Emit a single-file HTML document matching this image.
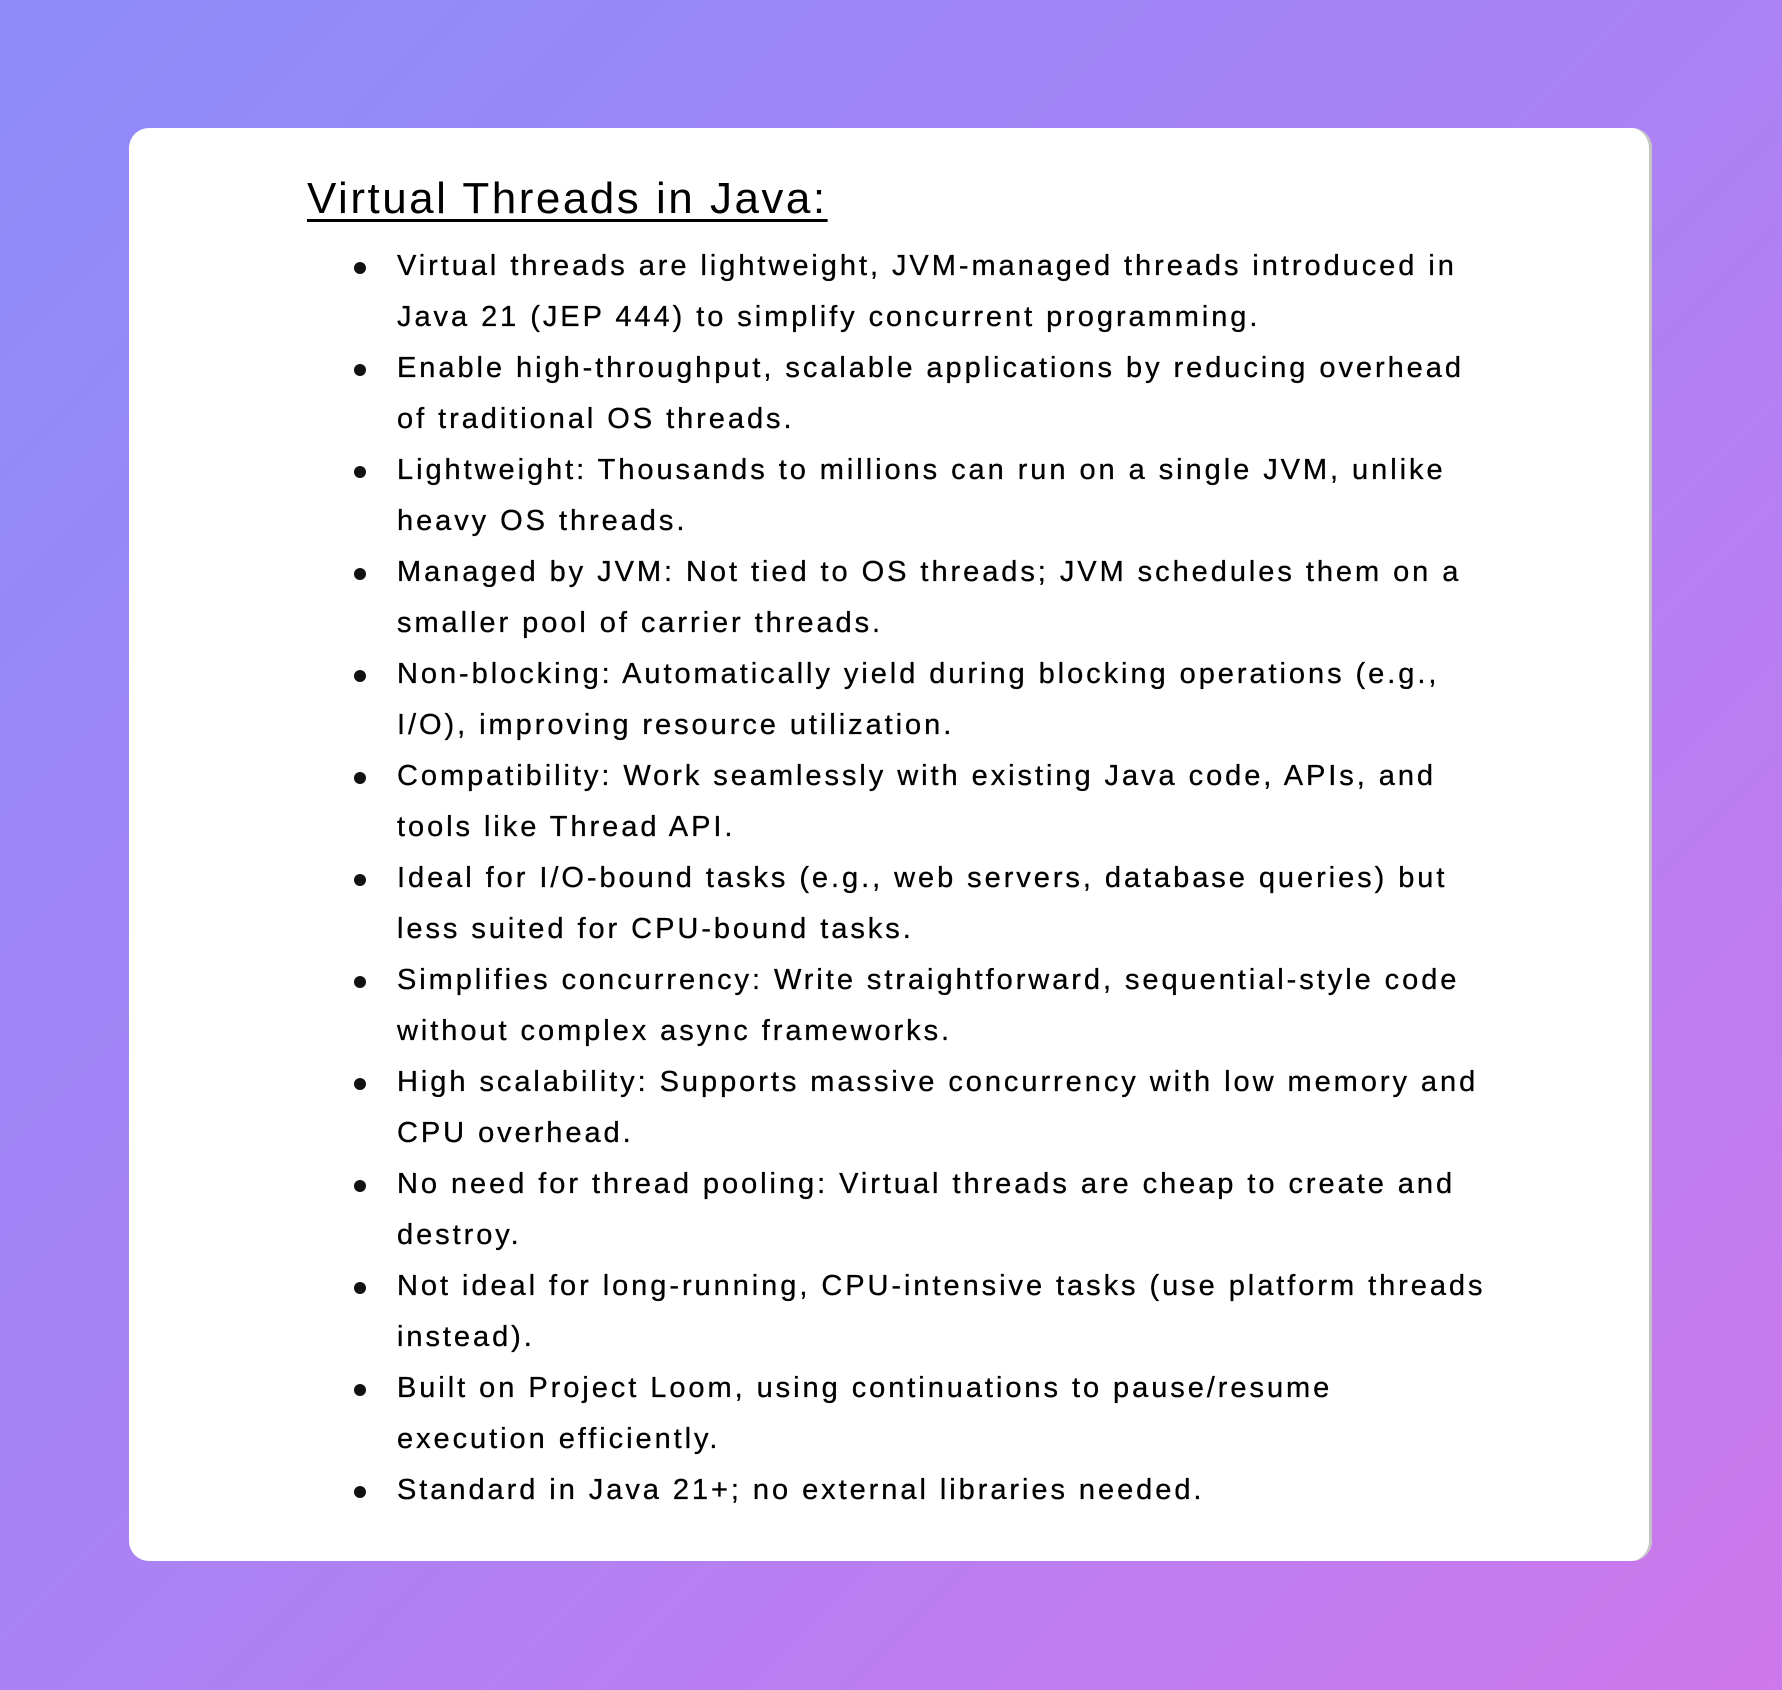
<!DOCTYPE html>
<html><head><meta charset="utf-8"><style>
html,body{margin:0;padding:0}
body{width:1782px;height:1690px;background:linear-gradient(135deg,#8d8cf9 0%,#ab82f4 50%,#cd78ec 100%);position:relative;overflow:hidden;font-family:"Liberation Sans",sans-serif;color:#000}
.card{position:absolute;left:129px;top:128px;width:1523px;height:1433px;background:#fff;border-radius:20px;box-shadow:inset -4px 0 0 -1px #c4c4c4}
h1{position:absolute;left:307px;top:172px;margin:0;font-weight:normal;font-size:44px;letter-spacing:2.5px;text-decoration:underline;text-decoration-thickness:3px;text-underline-offset:6px;line-height:54px}
ul{position:absolute;left:397px;top:241px;margin:0;padding:0;list-style:none;font-size:29px;line-height:51px;letter-spacing:2.95px;-webkit-text-stroke:0.3px #000}
li{position:relative;white-space:nowrap}
li:before{content:"";position:absolute;left:-43px;top:21px;width:12px;height:12px;border-radius:50%;background:#111}
</style></head><body>
<div class="card"></div>
<h1>Virtual Threads in Java:</h1>
<ul>
<li>Virtual threads are lightweight, JVM-managed threads introduced in<br>Java 21 (JEP 444) to simplify concurrent programming.</li>
<li>Enable high-throughput, scalable applications by reducing overhead<br>of traditional OS threads.</li>
<li>Lightweight: Thousands to millions can run on a single JVM, unlike<br>heavy OS threads.</li>
<li>Managed by JVM: Not tied to OS threads; JVM schedules them on a<br>smaller pool of carrier threads.</li>
<li>Non-blocking: Automatically yield during blocking operations (e.g.,<br>I/O), improving resource utilization.</li>
<li>Compatibility: Work seamlessly with existing Java code, APIs, and<br>tools like Thread API.</li>
<li>Ideal for I/O-bound tasks (e.g., web servers, database queries) but<br>less suited for CPU-bound tasks.</li>
<li>Simplifies concurrency: Write straightforward, sequential-style code<br>without complex async frameworks.</li>
<li>High scalability: Supports massive concurrency with low memory and<br>CPU overhead.</li>
<li>No need for thread pooling: Virtual threads are cheap to create and<br>destroy.</li>
<li>Not ideal for long-running, CPU-intensive tasks (use platform threads<br>instead).</li>
<li>Built on Project Loom, using continuations to pause/resume<br>execution efficiently.</li>
<li>Standard in Java 21+; no external libraries needed.</li>
</ul>
</body></html>
